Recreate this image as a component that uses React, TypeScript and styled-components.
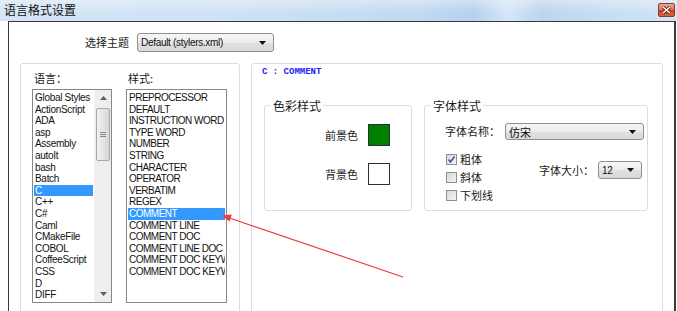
import React from "react";
import styled, { createGlobalStyle } from "styled-components";

const languages = [
  "Global Styles",
  "ActionScript",
  "ADA",
  "asp",
  "Assembly",
  "autoIt",
  "bash",
  "Batch",
  "C",
  "C++",
  "C#",
  "Caml",
  "CMakeFile",
  "COBOL",
  "CoffeeScript",
  "CSS",
  "D",
  "DIFF",
];

const styles = [
  "PREPROCESSOR",
  "DEFAULT",
  "INSTRUCTION WORD",
  "TYPE WORD",
  "NUMBER",
  "STRING",
  "CHARACTER",
  "OPERATOR",
  "VERBATIM",
  "REGEX",
  "COMMENT",
  "COMMENT LINE",
  "COMMENT DOC",
  "COMMENT LINE DOC",
  "COMMENT DOC KEYWORD",
  "COMMENT DOC KEYWORD ERROR",
];

const checks = [
  { label: "粗体", checked: true },
  { label: "斜体", checked: false },
  { label: "下划线", checked: false },
];

const DropArrow = () => (
  <svg width="7" height="4" viewBox="0 0 7 4">
    <path d="M0 0 H7 L3.5 4 Z" fill="#111" />
  </svg>
);

const App = () => {
  return (
    <>
      <GlobalStyle />
      <Window>
        <TitleBar>
          <Title>语言格式设置</Title>
          <CloseButton>
            <svg width="9" height="8" viewBox="0 0 9 8">
              <path d="M1 1 L8 7 M8 1 L1 7" stroke="#5a1a10" strokeWidth="3" />
              <path d="M1 1 L8 7 M8 1 L1 7" stroke="#fff" strokeWidth="1.6" />
            </svg>
          </CloseButton>
        </TitleBar>
        <Frame>
          <Content>
            <ThemeRow>
              <CjkLabel>选择主题</CjkLabel>
              <Combo width={137} height={19}>
                <ComboText>Default (stylers.xml)</ComboText>
                <DropArrow />
              </Combo>
            </ThemeRow>

            <Panels>
              <LeftPanel>
                <Column>
                  <ColumnLabel>语言：</ColumnLabel>
                  <ListBox width={80}>
                    <Items>
                      {languages.map((l) => (
                        <Item key={l} selected={l === "C"}>
                          {l}
                        </Item>
                      ))}
                    </Items>
                    <ScrollBar>
                      <ScrollArrow>
                        <svg width="7" height="4" viewBox="0 0 7 4">
                          <path d="M0 4 H7 L3.5 0 Z" fill="#606060" />
                        </svg>
                      </ScrollArrow>
                      <Thumb>
                        <Grip />
                      </Thumb>
                      <Track />
                      <ScrollArrow>
                        <svg width="7" height="4" viewBox="0 0 7 4">
                          <path d="M0 0 H7 L3.5 4 Z" fill="#606060" />
                        </svg>
                      </ScrollArrow>
                    </ScrollBar>
                  </ListBox>
                </Column>
                <Column>
                  <ColumnLabel>样式:</ColumnLabel>
                  <ListBox width={101}>
                    <Items>
                      {styles.map((s) => (
                        <Item key={s} selected={s === "COMMENT"} tight>
                          {s}
                        </Item>
                      ))}
                    </Items>
                  </ListBox>
                </Column>
              </LeftPanel>

              <RightPanel>
                <Heading>C : COMMENT</Heading>
                <Groups>
                  <GroupBox width={148}>
                    <Legend>色彩样式</Legend>
                    <ColorRows>
                      <ColorRow>
                        <CjkLabel>前景色</CjkLabel>
                        <Swatch color="#008000" />
                      </ColorRow>
                      <ColorRow>
                        <CjkLabel>背景色</CjkLabel>
                        <Swatch color="#ffffff" />
                      </ColorRow>
                    </ColorRows>
                  </GroupBox>

                  <GroupBox width={224}>
                    <Legend>字体样式</Legend>
                    <FontNameRow>
                      <CjkLabel>字体名称：</CjkLabel>
                      <Combo width={139} height={17}>
                        <ComboText cjk>仿宋</ComboText>
                        <DropArrow />
                      </Combo>
                    </FontNameRow>
                    <FontLower>
                      <Checks>
                        {checks.map((c) => (
                          <CheckRow key={c.label}>
                            <CheckBox>
                              {c.checked && (
                                <svg width="9" height="9" viewBox="0 0 9 9">
                                  <path
                                    d="M1.5 4.5 L3.5 7 L7.5 1.5"
                                    stroke="#3b57a8"
                                    strokeWidth="1.6"
                                    fill="none"
                                  />
                                </svg>
                              )}
                            </CheckBox>
                            <CjkLabel>{c.label}</CjkLabel>
                          </CheckRow>
                        ))}
                      </Checks>
                      <SizeRow>
                        <CjkLabel>字体大小：</CjkLabel>
                        <Combo width={44} height={18}>
                          <ComboText>12</ComboText>
                          <DropArrow />
                        </Combo>
                      </SizeRow>
                    </FontLower>
                  </GroupBox>
                </Groups>
              </RightPanel>
            </Panels>
          </Content>
        </Frame>

        <Pointer width="677" height="311" viewBox="0 0 677 311">
          <line x1="403" y1="277" x2="228" y2="217.5" stroke="#f23a3a" strokeWidth="1.2" />
          <path d="M221.5 215.5 L231.8 214.6 L229.6 221.6 Z" fill="#f23a3a" />
        </Pointer>
      </Window>
    </>
  );
};

export default App;

const GlobalStyle = createGlobalStyle`
  html, body {
    margin: 0;
    padding: 0;
    background: #fff;
  }
  body {
    width: 677px;
    height: 311px;
    overflow: hidden;
    font-family: "Liberation Sans", "Noto Sans CJK SC", sans-serif;
  }
`;

const Window = styled.div`
  position: relative;
  width: 677px;
  height: 311px;
  display: flex;
  flex-direction: column;
  overflow: hidden;
  background: #fff;
`;

const TitleBar = styled.div`
  height: 21px;
  flex-shrink: 0;
  display: flex;
  align-items: flex-start;
  padding: 0 2px 0 4px;
  box-sizing: border-box;
  background: linear-gradient(
      180deg,
      rgba(255, 255, 255, 0.35) 0%,
      rgba(255, 255, 255, 0) 60%
    ),
    linear-gradient(
      90deg,
      #d5e5f5 0%,
      #cfe1f4 35%,
      #c2d9f1 62%,
      #b6d1ee 70%,
      #d6e6f6 75%,
      #bcd5ef 80%,
      #c9def3 90%,
      #d2e4f5 100%
    );
`;

const Title = styled.span`
  font-family: "Noto Sans CJK SC", sans-serif;
  font-size: 12px;
  line-height: 20px;
  color: #111;
`;

const CloseButton = styled.div`
  margin-left: auto;
  margin-top: 3px;
  width: 17px;
  height: 14px;
  box-sizing: border-box;
  border: 1px solid #8d3a2b;
  border-radius: 2px;
  display: flex;
  align-items: center;
  justify-content: center;
  background: linear-gradient(180deg, #eba896 0%, #de7560 45%, #c93f22 55%, #d9623f 100%);
`;

const Frame = styled.div`
  flex: 1;
  display: flex;
  padding: 0 1px 0 8px;
  min-height: 0;
`;

const Content = styled.div`
  flex: 1;
  display: flex;
  flex-direction: column;
  border-top: 1px solid #3a3a3a;
  border-left: 1px solid #3a3a3a;
  border-right: 2px solid #3a3a3a;
  background: #fff;
  padding: 11px 0 0 11px;
  min-width: 0;
`;

const ThemeRow = styled.div`
  display: flex;
  align-items: center;
  gap: 8px;
  padding-left: 65px;
  height: 19px;
`;

const CjkLabel = styled.span`
  font-family: "Noto Sans CJK SC", sans-serif;
  font-size: 11px;
  line-height: 13px;
  color: #1a1a1a;
  white-space: nowrap;
`;

const Combo = styled.div<{ width: number; height: number }>`
  width: ${({ width }) => width}px;
  height: ${({ height }) => height}px;
  box-sizing: border-box;
  border: 1px solid #8e8f8f;
  border-radius: 3px;
  background: linear-gradient(180deg, #f6f6f6 0%, #ececec 50%, #e0e0e0 51%, #d9d9d9 100%);
  display: flex;
  align-items: center;
  justify-content: space-between;
  padding: 0 7px 0 3px;
`;

const ComboText = styled.span<{ cjk?: boolean }>`
  font-family: ${({ cjk }) =>
    cjk ? `"Noto Sans CJK SC", sans-serif` : `"Liberation Sans", sans-serif`};
  font-size: ${({ cjk }) => (cjk ? 11 : 10)}px;
  letter-spacing: ${({ cjk }) => (cjk ? 0 : -0.3)}px;
  color: #111;
  white-space: nowrap;
`;

const Panels = styled.div`
  display: flex;
  gap: 11px;
  margin-top: 11px;
`;

const LeftPanel = styled.div`
  width: 220px;
  height: 262px;
  flex-shrink: 0;
  box-sizing: border-box;
  border: 1px solid #d5dfe5;
  border-radius: 3px;
  padding: 8px 0 0 11px;
  display: flex;
  gap: 14px;
`;

const Column = styled.div`
  display: flex;
  flex-direction: column;
  gap: 4px;
`;

const ColumnLabel = styled.span`
  font-family: "Noto Sans CJK SC", sans-serif;
  font-size: 11px;
  line-height: 13px;
  height: 13px;
  padding-left: 2px;
  color: #1a1a1a;
`;

const ListBox = styled.div<{ width: number }>`
  width: ${({ width }) => width}px;
  height: 214px;
  box-sizing: border-box;
  border: 1px solid #828790;
  background: #fff;
  display: flex;
  overflow: hidden;
`;

const Items = styled.div`
  flex: 1;
  min-width: 0;
  padding: 2px 1px 0 1px;
  overflow: hidden;
`;

const Item = styled.div<{ selected?: boolean; tight?: boolean }>`
  height: 11.6px;
  line-height: 11.6px;
  padding-left: 1px;
  font-size: 10px;
  letter-spacing: ${({ tight }) => (tight ? -0.5 : -0.3)}px;
  white-space: nowrap;
  overflow: hidden;
  color: ${({ selected }) => (selected ? "#fff" : "#111")};
  background: ${({ selected }) => (selected ? "#3399ff" : "transparent")};
`;

const ScrollBar = styled.div`
  width: 16px;
  flex-shrink: 0;
  display: flex;
  flex-direction: column;
  background: #eeeeee;
  border-left: 1px solid #f4f4f4;
`;

const ScrollArrow = styled.div`
  height: 16px;
  display: flex;
  align-items: center;
  justify-content: center;
`;

const Thumb = styled.div`
  height: 53px;
  margin: 2px 1px 0 1px;
  box-sizing: border-box;
  border: 1px solid #a8a8a8;
  border-radius: 2px;
  background: linear-gradient(90deg, #f0f0f0 0%, #e4e4e4 50%, #d6d6d6 100%);
  display: flex;
  align-items: center;
  justify-content: center;
`;

const Grip = styled.div`
  width: 6px;
  height: 5px;
  background: repeating-linear-gradient(180deg, #8a8a8a 0 1px, transparent 1px 2px);
`;

const Track = styled.div`
  flex: 1;
`;

const RightPanel = styled.div`
  width: 412px;
  height: 262px;
  flex-shrink: 0;
  box-sizing: border-box;
  border: 1px solid #d5dfe5;
  border-radius: 3px;
  padding: 3px 0 0 10px;
  display: flex;
  flex-direction: column;
`;

const Heading = styled.div`
  font-family: "Liberation Mono", monospace;
  font-weight: bold;
  font-size: 9px;
  line-height: 11px;
  color: #2222ff;
`;

const Groups = styled.div`
  display: flex;
  gap: 12px;
  margin: 27px 0 0 2px;
`;

const GroupBox = styled.div<{ width: number }>`
  width: ${({ width }) => width}px;
  height: 106px;
  box-sizing: border-box;
  border: 1px solid #d5dfe5;
  border-radius: 3px;
  display: flex;
  flex-direction: column;
`;

const Legend = styled.span`
  align-self: flex-start;
  margin: -7px 0 0 6px;
  padding: 0 2px;
  background: #fff;
  font-family: "Noto Sans CJK SC", sans-serif;
  font-size: 12px;
  line-height: 13px;
  color: #1a1a1a;
`;

const ColorRows = styled.div`
  display: flex;
  flex-direction: column;
  gap: 17px;
  margin-top: 12px;
  padding-right: 21px;
`;

const ColorRow = styled.div`
  display: flex;
  justify-content: flex-end;
  align-items: center;
  gap: 10px;
`;

const Swatch = styled.div<{ color: string }>`
  width: 22px;
  height: 22px;
  box-sizing: border-box;
  border: 1px solid #2e2e2e;
  background: ${({ color }) => color};
`;

const FontNameRow = styled.div`
  display: flex;
  align-items: center;
  gap: 5px;
  padding-left: 20px;
  margin-top: 11px;
`;

const FontLower = styled.div`
  display: flex;
  padding: 0 5px 0 21px;
  margin-top: 10px;
`;

const Checks = styled.div`
  display: flex;
  flex-direction: column;
`;

const CheckRow = styled.div`
  display: flex;
  align-items: center;
  gap: 3px;
  height: 18px;
`;

const CheckBox = styled.span`
  width: 11px;
  height: 11px;
  box-sizing: border-box;
  border: 1px solid #8f8f8f;
  background: linear-gradient(135deg, #d8d8d8 0%, #f4f4f4 100%);
  display: flex;
  align-items: center;
  justify-content: center;
`;

const SizeRow = styled.div`
  margin-left: auto;
  margin-top: 11px;
  align-self: flex-start;
  display: flex;
  align-items: center;
  gap: 4px;
`;

const Pointer = styled.svg`
  position: absolute;
  left: 0;
  top: 0;
  pointer-events: none;
`;
